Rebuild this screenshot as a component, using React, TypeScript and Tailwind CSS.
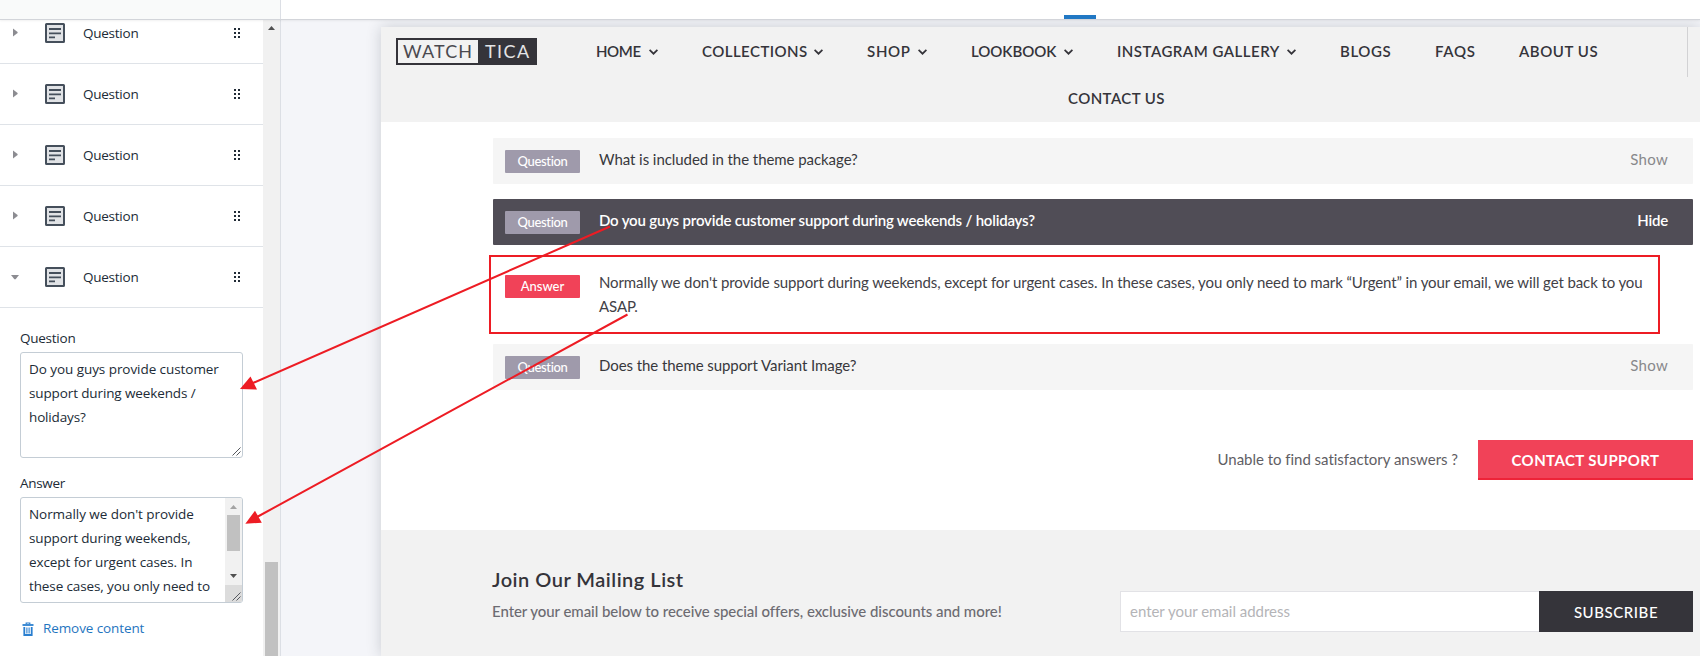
import { ReactNode } from "react";

function TextBlockIcon() {
  return (
    <svg width="20" height="20" viewBox="0 0 20 20" className="block shrink-0">
      <rect x="1" y="1" width="18" height="18" rx="0.5" fill="#e1e3e6" stroke="#454f5b" strokeWidth="2" />
      <path d="M4 6h12M4 10.4h12M4 14.4h6" stroke="#454f5b" strokeWidth="1.9" />
    </svg>
  );
}

function DragIcon() {
  return (
    <svg width="6" height="10" viewBox="0 0 6 10" className="block" fill="#212b36">
      {[0, 4].map((x) => [0, 4, 8].map((y) => <rect key={`${x}-${y}`} x={x} y={y} width="2" height="2" />))}
    </svg>
  );
}

function SidebarRow({ open = false }: { open?: boolean }) {
  return (
    <div className="flex h-[61px] shrink-0 items-center border-b border-[#dfe3e8]">
      <div className="flex w-[45px] pl-[11px]">
        <svg width="9" height="9" viewBox="0 0 9 9" fill="#8c8c91" className="-mt-0.5 block">
          {open ? <path d="M0 3h8L4.6 7.2H3.4z" /> : <path d="M2 0.5v8L6.6 5V4z" />}
        </svg>
      </div>
      <TextBlockIcon />
      <span className="ml-[18px] flex-1 text-[13.5px] tracking-[-0.25px]">Question</span>
      <div className="mr-[23px]">
        <DragIcon />
      </div>
    </div>
  );
}

function ResizeGrip() {
  return (
    <svg width="9" height="9" viewBox="0 0 9 9" className="absolute right-px bottom-px" stroke="#55585e" strokeWidth="1">
      <path d="M0.5 8.5L8.5 0.5M4.5 8.5L8.5 4.5" />
    </svg>
  );
}

function Sidebar() {
  return (
    <aside className="flex h-full w-[281px] shrink-0 overflow-hidden border-r border-[#dcdfe5] bg-white font-['Open_Sans',sans-serif] text-[#212b36]">
      <div className="-mt-[17px] flex w-[263px] flex-col">
        <SidebarRow />
        <SidebarRow />
        <SidebarRow />
        <SidebarRow />
        <SidebarRow open />
        <div className="flex flex-col pt-[18px] pl-5 text-[13.5px] leading-6">
          <label className="mb-0.5 tracking-[-0.25px]">Question</label>
          <div className="relative h-[106px] w-[223px] rounded-[3px] border border-[#c4cdd5] pt-1 pl-[8px] whitespace-nowrap">
            <div className="tracking-[-0.06px]">Do you guys provide customer</div>
            <div className="tracking-[-0.12px]">support during weekends /</div>
            <div className="tracking-[-0.15px]">holidays?</div>
            <ResizeGrip />
          </div>
          <label className="mt-[13px] mb-0.5 tracking-[-0.3px]">Answer</label>
          <div className="relative flex h-[106px] w-[223px] overflow-hidden rounded-[3px] border border-[#c4cdd5] whitespace-nowrap">
            <div className="w-[204px] pt-1 pl-[8px]">
              <div className="tracking-[-0.06px]">Normally we don't provide</div>
              <div className="tracking-[-0.12px]">support during weekends,</div>
              <div className="tracking-[-0.09px]">except for urgent cases. In</div>
              <div className="tracking-[-0.12px]">these cases, you only need to</div>
            </div>
            <div className="flex w-[17px] flex-col items-center bg-[#f1f1f1]">
              <svg width="7" height="4" viewBox="0 0 7 4" fill="#a3a3a3" className="mt-[7px] block">
                <path d="M0 4L3.5 0L7 4z" />
              </svg>
              <div className="mt-[6px] h-9 w-[13px] bg-[#c1c1c1]" />
              <svg width="7" height="4" viewBox="0 0 7 4" fill="#505050" className="mt-[23px] block">
                <path d="M0 0L3.5 4L7 0z" />
              </svg>
              <div className="mt-[7px] h-[17px] w-full bg-[#dcdcdc]" />
            </div>
            <ResizeGrip />
          </div>
          <div className="mt-[13px] flex items-center text-[#1f75c0]">
            <svg width="12" height="14" viewBox="0 0 12 14" className="mt-px ml-[2px] block" fill="none" stroke="#2a7fd0">
              <path d="M4.2 2V1h3.6v1" strokeWidth="1.2" />
              <path d="M0.5 3h11" strokeWidth="1.8" />
              <path d="M2.3 5v8h7.4V5" strokeWidth="1.8" />
              <path d="M4.9 5.5v6M7.1 5.5v6" strokeWidth="1.1" />
            </svg>
            <span className="ml-[9px] tracking-[-0.1px]">Remove content</span>
          </div>
        </div>
      </div>
      <div className="flex w-[17px] flex-col items-center bg-[#f1f1f1]">
        <svg width="7" height="4" viewBox="0 0 7 4" fill="#505050" className="mt-[6px] block">
          <path d="M0 4L3.5 0L7 4z" />
        </svg>
        <div className="mt-auto h-[94px] w-[13px] bg-[#c1c1c1]" />
      </div>
    </aside>
  );
}

function NavItem({ children, arrow = false, className }: { children: ReactNode; arrow?: boolean; className: string }) {
  return (
    <div className={`flex h-[47px] shrink-0 items-center whitespace-nowrap ${className}`}>
      <span>{children}</span>
      {arrow && (
        <svg width="9" height="6" viewBox="0 0 9 6" className="mt-px ml-auto block" fill="none" stroke="#35343a" strokeWidth="1.7">
          <path d="M0.6 0.8L4.5 4.7L8.4 0.8" />
        </svg>
      )}
    </div>
  );
}

function SiteHeader() {
  return (
    <header className="flex h-[95px] items-start bg-[#f2f2f2]">
      <div className="mt-[11px] ml-[15px] flex h-[27px] w-[141px] shrink-0 border-2 border-[#35343a] bg-[#35343a] text-[18px] leading-[23px]">
        <span className="w-[80px] bg-[#f2f2f2] pl-[5px] tracking-[1.1px] text-[#4a494f]">WATCH</span>
        <span className="pl-[7px] tracking-[1.4px] text-[#e4e4e6]">TICA</span>
      </div>
      <div className="flex flex-1 flex-col text-[15px] font-semibold text-[#35343a]">
        <div className="flex pt-px pl-[59px]">
          <NavItem arrow className="w-[62px] tracking-[-0.4px]">HOME</NavItem>
          <NavItem arrow className="ml-[44px] w-[121px] tracking-[0.45px]">COLLECTIONS</NavItem>
          <NavItem arrow className="ml-[44px] w-[60px] tracking-[0.7px]">SHOP</NavItem>
          <NavItem arrow className="ml-[44px] w-[102px] tracking-[-0.03px]">LOOKBOOK</NavItem>
          <NavItem arrow className="ml-[44px] w-[179px] tracking-[0.5px]">INSTAGRAM GALLERY</NavItem>
          <NavItem className="ml-[44px] w-[50px] tracking-[0.6px]">BLOGS</NavItem>
          <NavItem className="ml-[45px] w-[39px] tracking-[0.7px]">FAQS</NavItem>
          <NavItem className="ml-[45px] w-[79px] tracking-[0.55px]">ABOUT US</NavItem>
        </div>
        <NavItem className="pl-[531px] tracking-[0.42px]">CONTACT US</NavItem>
      </div>
      <div className="mr-[12px] h-[50px] w-px bg-[#d2d2d4]" />
    </header>
  );
}

function Badge({ answer = false }: { answer?: boolean }) {
  return (
    <span
      className={
        answer
          ? "h-[23px] w-[75px] rounded-[1px] bg-[#f14258] text-center text-[13px] leading-[22px] font-medium text-white"
          : "h-[23px] w-[75px] rounded-[1px] bg-[#9f9aab] text-center text-[13px] leading-[22px] font-medium tracking-[-0.35px] text-white"
      }
    >
      {answer ? "Answer" : "Question"}
    </span>
  );
}

function FaqRow({ question, open = false, tracking }: { question: string; open?: boolean; tracking: string }) {
  return (
    <div
      className={
        open
          ? "flex h-[46px] items-start rounded-[1px] bg-[#504d56] pt-3 pr-[25px] pl-3 font-semibold text-white"
          : "flex h-[46px] items-start rounded-[1px] bg-[#f5f5f5] pt-3 pr-[25px] pl-3 text-[#38383c]"
      }
    >
      <Badge />
      <span className={`-mt-[3px] ml-[19px] leading-6 ${tracking}`}>{question}</span>
      <span className={open ? "-mt-[3px] ml-auto leading-6 tracking-[-0.2px]" : "-mt-[3px] ml-auto leading-6 tracking-[0.3px] text-[#88888b]"}>
        {open ? "Hide" : "Show"}
      </span>
    </div>
  );
}

function Site() {
  return (
    <main className="mt-[7px] ml-[100px] flex flex-1 flex-col bg-white font-['Lato',sans-serif] text-[15px] whitespace-nowrap shadow-[0_0_14px_rgba(33,43,54,0.2)]">
      <SiteHeader />
      <section className="mt-4 mr-[7px] ml-[112px] flex flex-col">
        <FaqRow question="What is included in the theme package?" tracking="tracking-[-0.06px]" />
        <div className="mt-[15px] flex flex-col">
          <FaqRow
            open
            question="Do you guys provide customer support during weekends / holidays?"
            tracking="tracking-[-0.19px]"
          />
        </div>
        <div className="mt-[10px] mr-[33px] -ml-1 flex h-[79px] items-start border-2 border-[#ed1c24] pt-[13px] pl-[14px] text-[#424147]">
          <div className="flex pt-[5px]">
            <Badge answer />
          </div>
          <p className="ml-[19px] leading-6 tracking-[-0.106px]">
            Normally we don't provide support during weekends, except for urgent cases. In these cases, you only need to
            mark “Urgent” in your email, we will get back to you
            <br />
            ASAP.
          </p>
        </div>
        <div className="mt-[10px] flex flex-col">
          <FaqRow question="Does the theme support Variant Image?" tracking="tracking-[-0.07px]" />
        </div>
        <div className="mt-[50px] flex h-10 items-center justify-end">
          <span className="mr-5 -translate-y-px tracking-[-0.03px] text-[#5f5e64]">Unable to find satisfactory answers ?</span>
          <button className="h-10 w-[215px] border-b-2 border-[#ee2338] bg-[#f14258] pt-[2px] font-bold tracking-[0.4px] text-white">
            CONTACT SUPPORT
          </button>
        </div>
      </section>
      <footer className="mt-[50px] flex flex-1 items-start bg-[#f2f2f2] pr-[7px] pl-[111px]">
        <div className="pt-[35px]">
          <h2 className="text-[20px] leading-7 font-semibold tracking-[0.5px] text-[#35343a]">Join Our Mailing List</h2>
          <p className="mt-[6px] leading-6 font-medium tracking-[-0.06px] text-[#6c6b71]">
            Enter your email below to receive special offers, exclusive discounts and more!
          </p>
        </div>
        <div className="mt-[61px] ml-auto flex h-[41px] w-[573px]">
          <div className="flex flex-1 items-center border border-r-0 border-[#e2e2e6] bg-white pl-[9px] tracking-[-0.02px] text-[#b4b4b7]">
            enter your email address
          </div>
          <button className="w-[154px] bg-[#35343a] pt-px font-medium tracking-[0.55px] text-white">SUBSCRIBE</button>
        </div>
      </footer>
    </main>
  );
}

function Arrows() {
  return (
    <svg width="1700" height="656" viewBox="0 0 1700 656" className="pointer-events-none absolute top-0 left-0" fill="#ed1c24">
      <path d="M610 226.5L253 383M627.5 314.5L257 517" stroke="#ed1c24" strokeWidth="2" />
      <path d="M240 389L250.5 376.5L257 389.5z" />
      <path d="M245.3 523.7L255 510.7L261.8 522.8z" />
    </svg>
  );
}

export default function App() {
  return (
    <div className="relative flex h-[656px] w-[1700px] flex-col overflow-hidden bg-[#f4f5f9]">
      <div className="z-10 flex h-5 shrink-0 border-b border-[#d3d5da] bg-white shadow-[0_1px_2px_rgba(0,0,0,0.06)]">
        <div className="w-[281px] border-r border-[#dcdfe5] bg-[#f9fafa]" />
        <div className="mt-[15px] ml-[783px] h-1 w-8 bg-[#2178c4]" />
      </div>
      <div className="flex min-h-0 flex-1">
        <Sidebar />
        <Site />
      </div>
      <Arrows />
    </div>
  );
}
